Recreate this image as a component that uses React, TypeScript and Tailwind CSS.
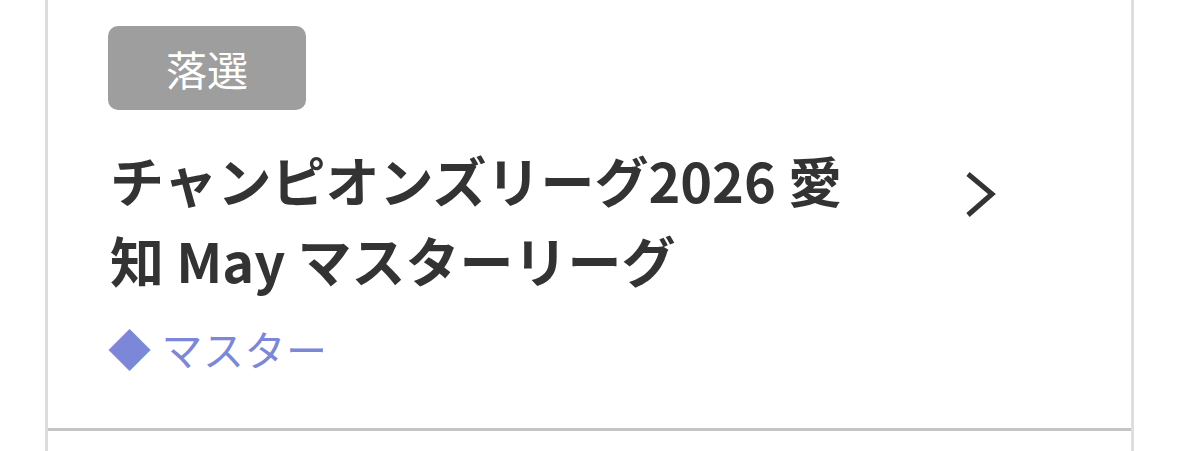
export default function App() {
  return (
    <div className="h-[451px] overflow-hidden bg-white" style={{ fontFamily: '"Noto Sans CJK JP", "Noto Sans", sans-serif' }}>
      <div className="ml-[45px] h-full w-[1089px] border-x-[3px] border-l-[#dcdcdc] border-r-[#dedede]">
        <div className="border-b-[3px] border-[#c4c4c4] pl-[60px] pr-[134px] pt-[26px] pb-[50px]">
          <div className="flex h-[84px] w-[198px] items-center justify-center rounded-[10px] bg-[#9e9e9e] text-[41px] leading-none text-white">
            落選
          </div>

          <div className="mt-[30px] flex items-start justify-between">
            <h2 className="w-[760px] pl-[2px] text-[54px] font-bold leading-[80px] text-[#333333]">
              チャンピオンズリーグ2026 愛知 May マスターリーグ
            </h2>
            <svg className="mt-[32px] shrink-0" width="32" height="46" viewBox="0 0 32 46" fill="none" stroke="#333333" strokeWidth="5" strokeLinecap="butt" strokeLinejoin="miter">
              <path d="M3 2 L27 22 L3 43" />
            </svg>
          </div>

          <p className="mt-[18px] flex items-center text-[41px] leading-[60px] tracking-[0.5px] text-[#7c87d8]">
            <span className="text-[43px]">◆</span>
            <span className="ml-[10px]">マスター</span>
          </p>
        </div>
      </div>
    </div>
  );
}
